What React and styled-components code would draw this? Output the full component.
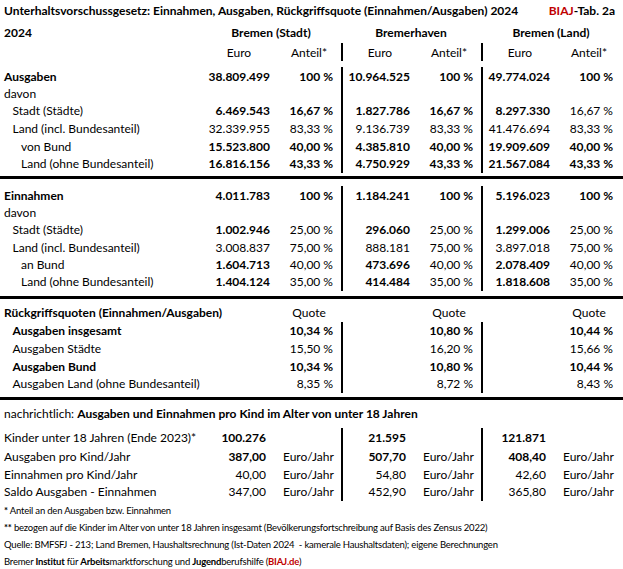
import React from 'react'
import styled, { createGlobalStyle } from 'styled-components'

const GlobalStyle = createGlobalStyle`
  html, body {
    margin: 0;
    padding: 0;
    background: #fff;
  }
  body {
    font-family: Lato, "Liberation Sans", sans-serif;
    font-size: 12px;
    color: #000;
  }
`;

const COLS = '201px 76px 64px 76px 64px 76px 64px';

const section1 = [
  { label: 'Ausgaben', bold: true, h: 24, pt: 6, cells: [['38.809.499', 1], ['100 %', 1], ['10.964.525', 1], ['100 %', 1], ['49.774.024', 1], ['100 %', 1]] },
  { label: 'davon', h: 17, cells: [] },
  { label: 'Stadt (Städte)', indent: 1, h: 17.5, cells: [['6.469.543', 1], ['16,67 %', 1], ['1.827.786', 1], ['16,67 %', 1], ['8.297.330', 1], ['16,67 %', 0]] },
  { label: 'Land (incl. Bundesanteil)', indent: 1, h: 17.5, cells: [['32.339.955', 0], ['83,33 %', 0], ['9.136.739', 0], ['83,33 %', 0], ['41.476.694', 0], ['83,33 %', 0]] },
  { label: 'von Bund', indent: 2, h: 18, cells: [['15.523.800', 1], ['40,00 %', 1], ['4.385.810', 1], ['40,00 %', 1], ['19.909.609', 1], ['40,00 %', 1]] },
  { label: 'Land (ohne Bundesanteil)', indent: 2, h: 17.5, cells: [['16.816.156', 1], ['43,33 %', 1], ['4.750.929', 1], ['43,33 %', 1], ['21.567.084', 1], ['43,33 %', 1]] },
];

const section2 = [
  { label: 'Einnahmen', bold: true, h: 18, cells: [['4.011.783', 1], ['100 %', 1], ['1.184.241', 1], ['100 %', 1], ['5.196.023', 1], ['100 %', 1]] },
  { label: 'davon', h: 17, cells: [] },
  { label: 'Stadt (Städte)', indent: 1, h: 17.5, cells: [['1.002.946', 1], ['25,00 %', 0], ['296.060', 1], ['25,00 %', 0], ['1.299.006', 1], ['25,00 %', 0]] },
  { label: 'Land (incl. Bundesanteil)', indent: 1, h: 17.5, cells: [['3.008.837', 0], ['75,00 %', 0], ['888.181', 0], ['75,00 %', 0], ['3.897.018', 0], ['75,00 %', 0]] },
  { label: 'an Bund', indent: 2, h: 17, cells: [['1.604.713', 1], ['40,00 %', 0], ['473.696', 1], ['40,00 %', 0], ['2.078.409', 1], ['40,00 %', 0]] },
  { label: 'Land (ohne Bundesanteil)', indent: 2, h: 17.5, cells: [['1.404.124', 1], ['35,00 %', 0], ['414.484', 1], ['35,00 %', 0], ['1.818.608', 1], ['35,00 %', 0]] },
];

const section3 = [
  { label: 'Ausgaben insgesamt', bold: true, indent: 1, h: 17.5, cells: [['', 0], ['10,34 %', 1], ['', 0], ['10,80 %', 1], ['', 0], ['10,44 %', 1]] },
  { label: 'Ausgaben Städte', indent: 1, h: 18, cells: [['', 0], ['15,50 %', 0], ['', 0], ['16,20 %', 0], ['', 0], ['15,66 %', 0]] },
  { label: 'Ausgaben Bund', bold: true, indent: 1, h: 18, cells: [['', 0], ['10,34 %', 1], ['', 0], ['10,80 %', 1], ['', 0], ['10,44 %', 1]] },
  { label: 'Ausgaben Land (ohne Bundesanteil)', indent: 1, h: 17.5, cells: [['', 0], ['8,35 %', 0], ['', 0], ['8,72 %', 0], ['', 0], ['8,43 %', 0]] },
];

const section4 = [
  { label: 'Kinder unter 18 Jahren (Ende 2023)*', h: 19, cells: [['100.276', 1], ['', 0], ['21.595', 1], ['', 0], ['121.871', 1], ['', 0]] },
  { label: 'Ausgaben pro Kind/Jahr', h: 18, cells: [['387,00', 1], ['Euro/Jahr', 0], ['507,70', 1], ['Euro/Jahr', 0], ['408,40', 1], ['Euro/Jahr', 0]] },
  { label: 'Einnahmen pro Kind/Jahr', h: 18, cells: [['40,00', 0], ['Euro/Jahr', 0], ['54,80', 0], ['Euro/Jahr', 0], ['42,60', 0], ['Euro/Jahr', 0]] },
  { label: 'Saldo Ausgaben - Einnahmen', h: 17.5, cells: [['347,00', 0], ['Euro/Jahr', 0], ['452,90', 0], ['Euro/Jahr', 0], ['365,80', 0], ['Euro/Jahr', 0]] },
];

function DataRow({ row, perKid }) {
  return (
    <Row $h={row.h} $pt={row.pt}>
      <Label $indent={row.indent || 0} $bold={row.bold}>{row.label}</Label>
      {[0, 1, 2].map((g) => {
        const euro = row.cells[g * 2] || ['', 0]
        const share = row.cells[g * 2 + 1] || ['', 0]
        return (
          <React.Fragment key={g}>
            <Num $sep={g > 0} $bold={euro[1]} $pr={perKid ? 11 : 7}>{euro[0]}</Num>
            {perKid
              ? <Unit>{share[0]}</Unit>
              : <Num $bold={share[1]} $pr={8}>{share[0]}</Num>}
          </React.Fragment>
        )
      })}
    </Row>
  )
}

function App() {
  return (
    <>
      <GlobalStyle />
      <Sheet>
        <TitleRow>
          <span>Unterhaltsvorschussgesetz: Einnahmen, Ausgaben, Rückgriffsquote (Einnahmen/Ausgaben) 2024</span>
          <span><Red>BIAJ</Red>-Tab. 2a</span>
        </TitleRow>

        <Row $h={22}>
          <Label $indent={0} $bold>2024</Label>
          <Region>Bremen (Stadt)</Region>
          <Region>Bremerhaven</Region>
          <Region>Bremen (Land)</Region>
        </Row>
        <Row $h={18}>
          <Label $indent={0} />
          {[0, 1, 2].map((g) => (
            <React.Fragment key={g}>
              <Head $sep={g > 0}>Euro</Head>
              <Head>Anteil*</Head>
            </React.Fragment>
          ))}
        </Row>
        {section1.map((r, i) => <DataRow key={i} row={r} />)}
        <Rule $top={3.5} $bottom={7} />
        {section2.map((r, i) => <DataRow key={i} row={r} />)}
        <Rule $top={5} $bottom={0} />

        <Row $h={23} $pt={5}>
          <Label $indent={0} $bold>Rückgriffsquoten (Einnahmen/Ausgaben)</Label>
          {[0, 1, 2].map((g) => (
            <React.Fragment key={g}>
              <Blank />
              <QuoteHead>Quote</QuoteHead>
            </React.Fragment>
          ))}
        </Row>
        {section3.map((r, i) => <DataRow key={i} row={r} />)}
        <Rule $top={4.5} $bottom={0} />

        <NoteRow>
          nachrichtlich: <b>Ausgaben und Einnahmen pro Kind im Alter von unter 18 Jahren</b>
        </NoteRow>
        {section4.map((r, i) => <DataRow key={i} row={r} perKid />)}

        <Footnotes>
          <p><b>*</b> Anteil an den Ausgaben bzw. Einnahmen</p>
          <p><b>**</b> bezogen auf die Kinder im Alter von unter 18 Jahren insgesamt (Bevölkerungsfortschreibung auf Basis des Zensus 2022)</p>
          <p>Quelle: BMFSFJ - 213; Land Bremen, Haushaltsrechnung (Ist-Daten 2024  - kamerale Haushaltsdaten); eigene Berechnungen</p>
          <p>Bremer <b>Institut</b> für <b>Arbeits</b>marktforschung und <b>Jugend</b>berufshilfe (<Red>BIAJ.de</Red>)</p>
        </Footnotes>
      </Sheet>
    </>
  )
}

export default App

const Sheet = styled.div`
  width: 621px;
  display: flex;
  flex-direction: column;
`;

const TitleRow = styled.div`
  height: 21px;
  display: flex;
  align-items: center;
  justify-content: space-between;
  padding: 0 6px 0 4px;
  font-weight: 700;
  white-space: nowrap;
`;

const Red = styled.span`
  color: #c00000;
  font-weight: 700;
`;

const Row = styled.div`
  display: grid;
  grid-template-columns: ${COLS};
  height: ${(p) => p.$h}px;
  padding-top: ${(p) => p.$pt || 0}px;
  box-sizing: border-box;
  white-space: nowrap;
`;

const Cell = styled.div`
  display: flex;
  align-items: center;
  box-sizing: border-box;
`;

const Label = styled(Cell)`
  padding-left: ${(p) => 4 + (p.$indent || 0) * 8.5}px;
  font-weight: ${(p) => (p.$bold ? 700 : 400)};
`;

const Num = styled(Cell)`
  justify-content: flex-end;
  padding-right: ${(p) => p.$pr}px;
  font-weight: ${(p) => (p.$bold ? 700 : 400)};
  border-left: ${(p) => (p.$sep ? '2px solid #000' : 'none')};
`;

const Unit = styled(Cell)`
  padding-left: 6px;
`;

const Head = styled(Cell)`
  justify-content: center;
  border-left: ${(p) => (p.$sep ? '2px solid #000' : 'none')};
`;

const Region = styled(Cell)`
  grid-column: span 2;
  justify-content: center;
  font-weight: 700;
`;

const Blank = styled(Cell)``;

const QuoteHead = styled(Cell)`
  justify-content: center;
`;

const NoteRow = styled.div`
  height: 28px;
  line-height: 28px;
  padding-left: 4px;
  white-space: nowrap;
  b { font-weight: 700; }
`;

const Rule = styled.div`
  width: 623px;
  height: 3px;
  background: #000;
  margin: ${(p) => p.$top}px 0 ${(p) => p.$bottom}px;
`;

const Footnotes = styled.div`
  padding: 1px 0 0 4px;
  font-size: 9.5px;
  letter-spacing: -0.2px;
  p {
    margin: 0;
    height: 17px;
    line-height: 17px;
    white-space: pre;
  }
  b { font-weight: 700; }
`;
